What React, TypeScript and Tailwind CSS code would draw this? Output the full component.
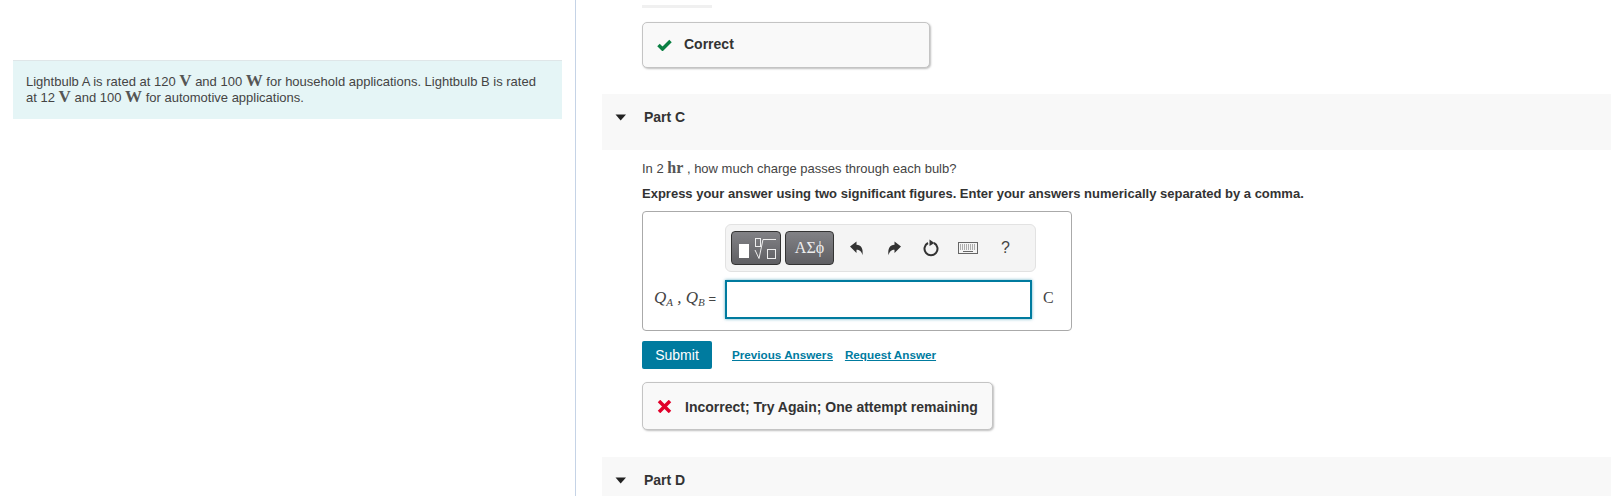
const SANS = "font-['Liberation_Sans',Arial,sans-serif]";
const MATH = "font-['Liberation_Serif',serif]";

function PartHeader({ label, className }: { label: string; className: string }) {
  return (
    <div className={`flex items-center bg-[#f8f8f8] pl-[13px] ${className}`}>
      <svg width="12" height="7" viewBox="0 0 12 7" className="mr-[17px]">
        <path d="M0.5 0.5h10.5L5.7 6.5z" fill="#222" />
      </svg>
      <span className="text-[14px] font-bold text-[#333]">{label}</span>
    </div>
  );
}

function MathBold({ children }: { children: string }) {
  return <span className={`${MATH} text-[17px] leading-[12px] font-bold text-[#555]`}>{children}</span>;
}

export default function App() {
  return (
    <div className={`${SANS} flex h-[496px] w-[1611px] overflow-hidden bg-white text-[#333]`}>
      {/* Left column */}
      <div className="h-full w-[576px] shrink-0 border-r border-[#c5d3e6] pl-[13px] pt-[60px]">
        <div className="h-[59px] w-[549px] border-t border-[#dfe6e8] bg-[#e5f5f6] px-[13px] pt-[13px] text-[13px] leading-[16px] text-[#444]">
          Lightbulb A is rated at 120 <MathBold>V</MathBold> and 100 <MathBold>W</MathBold> for household applications. Lightbulb B is rated
          <br />
          at 12 <MathBold>V</MathBold> and 100 <MathBold>W</MathBold> for automotive applications.
        </div>
      </div>

      {/* Right column */}
      <div className="flex-1 pl-[26px]">
        <div className="pl-[40px] pt-[5px]">
          <div className="h-[3px] w-[70px] bg-[#f0f0f0]" />
          <div className="mt-[14px] flex h-[46px] w-[288px] items-center rounded-[5px] border border-[#c4c4c4] bg-[#f9f9f9] pl-[14px] shadow-[1px_1px_2px_rgba(0,0,0,0.25)]">
            <svg width="15" height="12" viewBox="0 0 15 12">
              <path d="M1.500 6l4 4L13.500 2" fill="none" stroke="#0a8043" strokeWidth="3.500" />
            </svg>
            <span className="ml-[12px] mt-[-1px] text-[14px] font-bold text-[#333]">Correct</span>
          </div>
        </div>

        <PartHeader label="Part C" className="mt-[26px] h-[56px] pb-[10px]" />

        <div className="pl-[40px]">
          <p className="mt-[10px] h-[17px] text-[13px] leading-[17px] text-[#444]">
            In 2 <span className={`${MATH} text-[16px] leading-[12px] font-bold text-[#555]`}>hr</span> , how much charge passes through each bulb?
          </p>
          <p className="mt-[9px] text-[13px] leading-[16px] font-bold text-[#333]">
            Express your answer using two significant figures. Enter your answers numerically separated by a comma.
          </p>

          {/* Answer box */}
          <div className="mt-[9px] h-[120px] w-[430px] rounded-[4px] border border-[#aaa] pl-[82px] pt-[12px]">
            <div className="flex h-[48px] w-[311px] items-center rounded-[6px] border border-[#e2e2e2] bg-[#f4f4f4] pl-[5px]">
              <div className="h-[34px] w-[50px] rounded-[4px] border border-[#333] bg-linear-to-b from-[#828286] to-[#5f5f63]">
                <svg width="48" height="32" viewBox="0 0 48 32">
                  <rect x="7" y="12" width="10" height="14" fill="#fff" />
                  <rect x="23.500" y="6.500" width="5" height="8" fill="none" stroke="#eee" />
                  <path d="M23 18l4 8.500 4-19h13" fill="none" stroke="#eee" />
                  <rect x="35.500" y="17.500" width="8" height="9" fill="none" stroke="#eee" />
                </svg>
              </div>
              <div className={`${MATH} ml-[4px] flex h-[34px] w-[49px] items-center justify-center rounded-[4px] border border-[#333] bg-linear-to-b from-[#828286] to-[#5f5f63] text-[16px] text-[#eee]`}>
                ΑΣϕ
              </div>
              <svg width="16" height="15" viewBox="0 0 16 15" className="ml-[15px]">
                <path d="M1 5.500L7.500 0.500v3.200c4.500 0 7 3.800 6 10.500-1-4-3-5.500-6-5.500v3.200z" fill="#333" />
              </svg>
              <svg width="16" height="15" viewBox="0 0 16 15" className="ml-[21px]">
                <path d="M15 5.500L8.500 0.500v3.200c-4.500 0-7 3.800-6 10.500 1-4 3-5.500 6-5.500v3.200z" fill="#333" />
              </svg>
              <svg width="18" height="18" viewBox="0 0 18 18" className="ml-[20px]">
                <path d="M12 4a6.500 6.500 0 1 1-6 0" fill="none" stroke="#333" strokeWidth="2" />
                <path d="M7.500 0.500l5 3.500-5 3z" fill="#333" />
              </svg>
              <svg width="20" height="12" viewBox="0 0 20 12" className="ml-[18px]">
                <rect x="0.500" y="0.500" width="19" height="11" fill="#f4f4f4" stroke="#666" />
                <path d="M2 3h16M2 5h16M2 7h16" stroke="#666" strokeDasharray="1 1" />
                <path d="M5 9.500h10" stroke="#666" />
              </svg>
              <span className="ml-[23px] text-[16px] text-[#444]">?</span>
            </div>
            <div className="relative mt-[8px] h-[39px] w-[307px] border-2 border-[#007b9f] bg-white shadow-[0_0_3px_rgba(0,123,159,0.6)]">
              <span className="absolute right-[314px] top-[8px] whitespace-nowrap text-[13px] leading-[16px] text-[#444]">
                <span className={`${MATH} italic text-[17px]`}>Q<sub className="text-[11px]">A</sub> , Q<sub className="text-[11px]">B</sub></span> =
              </span>
              <span className={`${MATH} absolute left-[316px] top-[7px] text-[16px] leading-[18px] text-[#444]`}>C</span>
            </div>
          </div>

          {/* Actions */}
          <div className="mt-[10px] flex items-center">
            <button className="h-[28px] w-[70px] rounded-[2px] bg-[#007b9f] text-[14px] text-white">Submit</button>
            <a className="ml-[20px] mt-[-1px] text-[11.700px] font-bold text-[#007b9f] underline">Previous Answers</a>
            <a className="ml-[12px] mt-[-1px] text-[11.700px] font-bold text-[#007b9f] underline">Request Answer</a>
          </div>

          <div className="mt-[13px] flex h-[48px] w-[351px] items-center rounded-[5px] border border-[#c4c4c4] bg-[#f9f9f9] pl-[14px] shadow-[1px_1px_2px_rgba(0,0,0,0.25)]">
            <svg width="15" height="13" viewBox="0 0 15 13">
              <path d="M2 1l11 11M13 1L2 12" fill="none" stroke="#e1002a" strokeWidth="3.500" />
            </svg>
            <span className="ml-[13px] pt-[2px] text-[14px] font-bold text-[#333]">Incorrect; Try Again; One attempt remaining</span>
          </div>
        </div>

        <PartHeader label="Part D" className="mt-[27px] h-[40px] pt-[6px]" />
      </div>
    </div>
  );
}
